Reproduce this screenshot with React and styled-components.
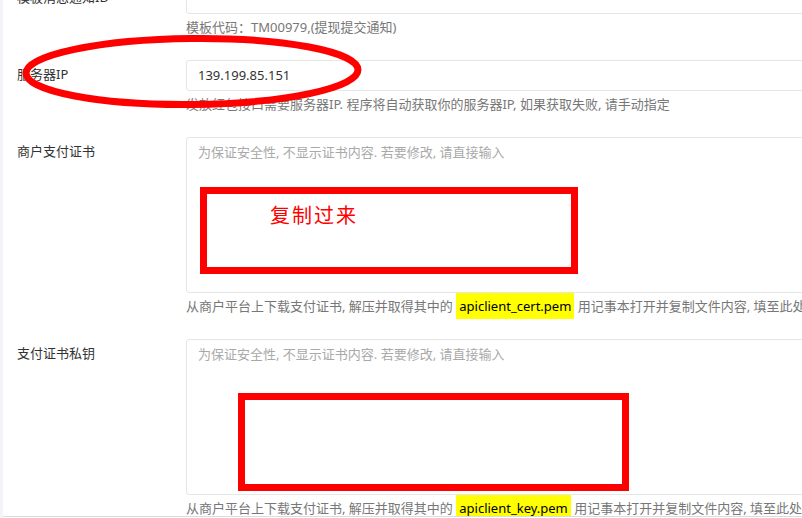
import React from "react";
import styled, { createGlobalStyle } from "styled-components";

const GlobalStyle = createGlobalStyle`
  html, body {
    margin: 0;
    padding: 0;
    background: #fff;
  }
  body {
    font-family: "Noto Sans", "Noto Sans CJK SC", sans-serif;
    font-size: 13px;
    color: #333;
  }
`;

const fields = [
  {
    label: "模板消息通知ID",
    kind: "input",
    value: "",
    help: "模板代码：TM00979,(提现提交通知)",
  },
  {
    label: "服务器IP",
    kind: "input",
    value: "139.199.85.151",
    help: "发放红包接口需要服务器IP. 程序将自动获取你的服务器IP, 如果获取失败, 请手动指定",
  },
  {
    label: "商户支付证书",
    kind: "textarea",
    file: "apiclient_cert.pem",
    height: 156,
    mark: { left: 13, top: 49, width: 378, height: 87, text: "复制过来" },
  },
  {
    label: "支付证书私钥",
    kind: "textarea",
    file: "apiclient_key.pem",
    height: 156,
    mark: { left: 51, top: 53, width: 391, height: 98 },
  },
];

const App = () => {
  return (
    <>
      <GlobalStyle />
      <Page>
        <Content>
          {fields.map((f) => (
            <FormGroup key={f.label}>
              <Label>{f.label}</Label>
              <Control>
                {f.kind === "input" ? (
                  <Input>{f.value}</Input>
                ) : (
                  <TextArea $height={f.height}>
                    <Placeholder>
                      为保证安全性, 不显示证书内容. 若要修改, 请直接输入
                    </Placeholder>
                    <RedBox
                      style={{
                        left: f.mark.left,
                        top: f.mark.top,
                        width: f.mark.width,
                        height: f.mark.height,
                      }}
                    >
                      {f.mark.text && <RedText>{f.mark.text}</RedText>}
                    </RedBox>
                  </TextArea>
                )}
                <Help>
                  {f.help ? (
                    f.help
                  ) : (
                    <>
                      从商户平台上下载支付证书, 解压并取得其中的{" "}
                      <Mark>{f.file}</Mark> 用记事本打开并复制文件内容, 填至此处
                    </>
                  )}
                </Help>
              </Control>
            </FormGroup>
          ))}
        </Content>
        <BottomRule />
        <Ellipse width="400" height="120" viewBox="0 0 400 120">
          <ellipse
            cx="192"
            cy="71.5"
            rx="166"
            ry="33"
            transform="rotate(-0.6 192 71.5)"
            fill="none"
            stroke="#ff0000"
            strokeWidth="7"
          />
        </Ellipse>
      </Page>
    </>
  );
};

const Page = styled.div`
  position: relative;
  display: flex;
  flex-direction: column;
  width: 802px;
  height: 518px;
  overflow: hidden;
  border-left: 3px solid #f3f3f8;
  box-sizing: border-box;
  background: #fff;
`;

const Content = styled.div`
  flex: 1;
  overflow: hidden;
  margin-top: -17px;
`;

const FormGroup = styled.div`
  display: flex;
  margin-bottom: 22px;
`;

const Label = styled.div`
  flex: 0 0 183px;
  box-sizing: border-box;
  height: 31px;
  padding-left: 14px;
  line-height: 29px;
  color: #333;
  white-space: nowrap;
`;

const Control = styled.div`
  flex: 0 0 720px;
`;

const Input = styled.div`
  box-sizing: border-box;
  height: 31px;
  border: 1px solid #e5e6e7;
  border-radius: 3px;
  padding: 0 11px;
  line-height: 28px;
  color: #333;
`;

const TextArea = styled.div`
  position: relative;
  box-sizing: border-box;
  height: ${(p) => p.$height}px;
  border: 1px solid #e5e6e7;
  border-radius: 3px;
  padding: 4px 11px;
  line-height: 20px;
`;

const Placeholder = styled.div`
  height: 20px;
  color: #a9a9a9;
  white-space: nowrap;
`;

const RedBox = styled.div`
  position: absolute;
  box-sizing: border-box;
  border: 7px solid #ff0000;
  padding: 9px 0 0 63px;
`;

const RedText = styled.div`
  color: #ff0000;
  font-family: "Noto Sans CJK SC", sans-serif;
  font-size: 20px;
  line-height: 24px;
  letter-spacing: 2px;
`;

const Help = styled.div`
  height: 20px;
  margin-top: 3px;
  margin-bottom: 1px;
  line-height: 20px;
  color: #777;
  white-space: nowrap;
`;

const Mark = styled.span`
  background: #ffff00;
  color: #000;
  padding: 4px 3px;
`;

const BottomRule = styled.div`
  flex: 0 0 2px;
  border-top: 1px solid #dcdcdc;
  box-sizing: border-box;
`;

const Ellipse = styled.svg`
  position: absolute;
  left: -3px;
  top: 0;
  pointer-events: none;
`;

export default App;
